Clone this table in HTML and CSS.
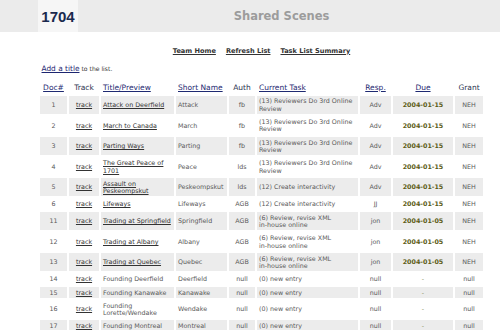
FILE: index.html
```html
<!DOCTYPE html>
<html lang="en">
<head>
    <meta charset="UTF-8">
    <meta name="viewport" content="width=device-width, initial-scale=1.0">
    <title>Shared Scenes</title>
    <link rel="stylesheet" href="styles.css">
</head>
<body>
    <div class="header">
        <div class="header-inner">
            <div class="project-id">1704</div>
            <div class="page-title">Shared Scenes</div>
        </div>
    </div>

    <div class="content">
        <div class="nav">
            <a href="#">Team Home</a>
            <a href="#">Refresh List</a>
            <a href="#">Task List Summary</a>
        </div>

        <p class="add-title"><a href="#">Add a title</a> to the list.</p>

        <table class="scenes">
            <colgroup>
                <col class="col-doc">
                <col class="col-track">
                <col class="col-title">
                <col class="col-short">
                <col class="col-auth">
                <col class="col-task">
                <col class="col-resp">
                <col class="col-due">
                <col class="col-grant">
            </colgroup>
            <thead>
                <tr>
                    <th><a href="#">Doc#</a></th>
                    <th>Track</th>
                    <th class="left"><a href="#">Title/Preview</a></th>
                    <th class="left"><a href="#">Short Name</a></th>
                    <th>Auth</th>
                    <th class="left"><a href="#">Current Task</a></th>
                    <th><a href="#">Resp.</a></th>
                    <th><a href="#">Due</a></th>
                    <th>Grant</th>
                </tr>
            </thead>
            <tbody>
                <tr>
                    <td>1</td><td><a href="#">track</a></td>
                    <td class="left"><a href="#">Attack on Deerfield</a></td>
                    <td class="left">Attack</td><td>fb</td>
                    <td class="left">(13) Reviewers Do 3rd Online Review</td>
                    <td>Adv</td><td class="due">2004-01-15</td><td>NEH</td>
                </tr>
                <tr>
                    <td>2</td><td><a href="#">track</a></td>
                    <td class="left"><a href="#">March to Canada</a></td>
                    <td class="left">March</td><td>fb</td>
                    <td class="left">(13) Reviewers Do 3rd Online Review</td>
                    <td>Adv</td><td class="due">2004-01-15</td><td>NEH</td>
                </tr>
                <tr>
                    <td>3</td><td><a href="#">track</a></td>
                    <td class="left"><a href="#">Parting Ways</a></td>
                    <td class="left">Parting</td><td>fb</td>
                    <td class="left">(13) Reviewers Do 3rd Online Review</td>
                    <td>Adv</td><td class="due">2004-01-15</td><td>NEH</td>
                </tr>
                <tr>
                    <td>4</td><td><a href="#">track</a></td>
                    <td class="left"><a href="#">The Great Peace of 1701</a></td>
                    <td class="left">Peace</td><td>lds</td>
                    <td class="left">(13) Reviewers Do 3rd Online Review</td>
                    <td>Adv</td><td class="due">2004-01-15</td><td>NEH</td>
                </tr>
                <tr>
                    <td>5</td><td><a href="#">track</a></td>
                    <td class="left"><a href="#">Assault on Peskeompskut</a></td>
                    <td class="left">Peskeompskut</td><td>lds</td>
                    <td class="left">(12) Create interactivity</td>
                    <td>Adv</td><td class="due">2004-01-15</td><td>NEH</td>
                </tr>
                <tr>
                    <td>6</td><td><a href="#">track</a></td>
                    <td class="left"><a href="#">Lifeways</a></td>
                    <td class="left">Lifeways</td><td>AGB</td>
                    <td class="left">(12) Create interactivity</td>
                    <td>JJ</td><td class="due">2004-01-15</td><td>NEH</td>
                </tr>
                <tr>
                    <td>11</td><td><a href="#">track</a></td>
                    <td class="left nowrap"><a href="#">Trading at Springfield</a></td>
                    <td class="left">Springfield</td><td>AGB</td>
                    <td class="left">(6) Review, revise XML <span class="nowrap">in-house</span> online</td>
                    <td>jon</td><td class="due">2004-01-05</td><td>NEH</td>
                </tr>
                <tr>
                    <td>12</td><td><a href="#">track</a></td>
                    <td class="left"><a href="#">Trading at Albany</a></td>
                    <td class="left">Albany</td><td>AGB</td>
                    <td class="left">(6) Review, revise XML <span class="nowrap">in-house</span> online</td>
                    <td>jon</td><td class="due">2004-01-05</td><td>NEH</td>
                </tr>
                <tr>
                    <td>13</td><td><a href="#">track</a></td>
                    <td class="left"><a href="#">Trading at Quebec</a></td>
                    <td class="left">Quebec</td><td>AGB</td>
                    <td class="left">(6) Review, revise XML <span class="nowrap">in-house</span> online</td>
                    <td>jon</td><td class="due">2004-01-05</td><td>NEH</td>
                </tr>
                <tr>
                    <td>14</td><td><a href="#">track</a></td>
                    <td class="left">Founding Deerfield</td>
                    <td class="left">Deerfield</td><td>null</td>
                    <td class="left">(0) new entry</td>
                    <td>null</td><td class="no-due">-</td><td>null</td>
                </tr>
                <tr>
                    <td>15</td><td><a href="#">track</a></td>
                    <td class="left">Founding Kanawake</td>
                    <td class="left">Kanawake</td><td>null</td>
                    <td class="left">(0) new entry</td>
                    <td>null</td><td class="no-due">-</td><td>null</td>
                </tr>
                <tr>
                    <td>16</td><td><a href="#">track</a></td>
                    <td class="left">Founding Lorette/Wendake</td>
                    <td class="left">Wendake</td><td>null</td>
                    <td class="left">(0) new entry</td>
                    <td>null</td><td class="no-due">-</td><td>null</td>
                </tr>
                <tr>
                    <td>17</td><td><a href="#">track</a></td>
                    <td class="left">Founding Montreal</td>
                    <td class="left">Montreal</td><td>null</td>
                    <td class="left">(0) new entry</td>
                    <td>null</td><td class="no-due">-</td><td>null</td>
                </tr>
            </tbody>
        </table>
    </div>
</body>
</html>
```

FILE: styles.css
```css
/* Global Styles */
* {
    margin: 0;
    padding: 0;
    box-sizing: border-box;
}

body {
    font-family: "DejaVu Sans", Verdana, sans-serif;
    background-color: #fff;
    color: #5a5a5a;
}

/* Header band */
.header {
    background-color: #ebebeb;
    height: 32px;
}

.header-inner {
    display: flex;
    height: 100%;
    width: 447px;
    margin-left: 38px;
}

.project-id {
    width: 40px;
    display: flex;
    align-items: center;
    justify-content: center;
    background-color: #f6f6f6;
    font-family: "Liberation Sans", Arial, sans-serif;
    font-size: 15px;
    font-weight: bold;
    color: #1b2a4e;
}

.page-title {
    flex: 1;
    display: flex;
    align-items: center;
    justify-content: center;
    font-size: 11.5px;
    font-weight: bold;
    color: #9c9c9c;
}

/* Content */
.content {
    width: 447px;
    margin-left: 38px;
}

.nav {
    display: flex;
    justify-content: center;
    gap: 10px;
    padding-top: 14.5px;
    font-size: 6.6px;
    font-weight: bold;
    line-height: 9px;
}

.nav a {
    color: #333;
}

.add-title {
    margin-top: 8px;
    padding-left: 3.5px;
    font-size: 6.1px;
    line-height: 9px;
    color: #333;
}

.add-title a {
    font-size: 7.4px;
    color: #1d2670;
}

/* Scenes table */
.scenes {
    margin-top: 6px;
    width: 447px;
    table-layout: fixed;
    border-spacing: 2px;
}

.col-doc { width: 27px; }
.col-track { width: 30px; }
.col-title { width: 73px; }
.col-short { width: 51px; }
.col-auth { width: 26px; }
.col-task { width: 101px; }
.col-resp { width: 31px; }
.col-due { width: 60px; }
.col-grant { width: 28px; }

.scenes th {
    padding: 2px;
    font-size: 7.5px;
    font-weight: normal;
    line-height: 9px;
    color: #2b3350;
    text-align: center;
}

.scenes th a {
    color: #1f2a72;
}

.scenes td {
    padding: 1.9px 2px;
    font-size: 6.35px;
    line-height: 7.4px;
    text-align: center;
    vertical-align: middle;
}

.scenes td a {
    color: #333;
}

.scenes tbody tr:nth-child(odd) td {
    background-color: #ececec;
}

.scenes .left {
    text-align: left;
}

.nowrap {
    white-space: nowrap;
}

.due {
    font-size: 6.5px;
    font-weight: bold;
    color: #5c5c14;
}

.no-due {
    color: #8a8a60;
}
```
